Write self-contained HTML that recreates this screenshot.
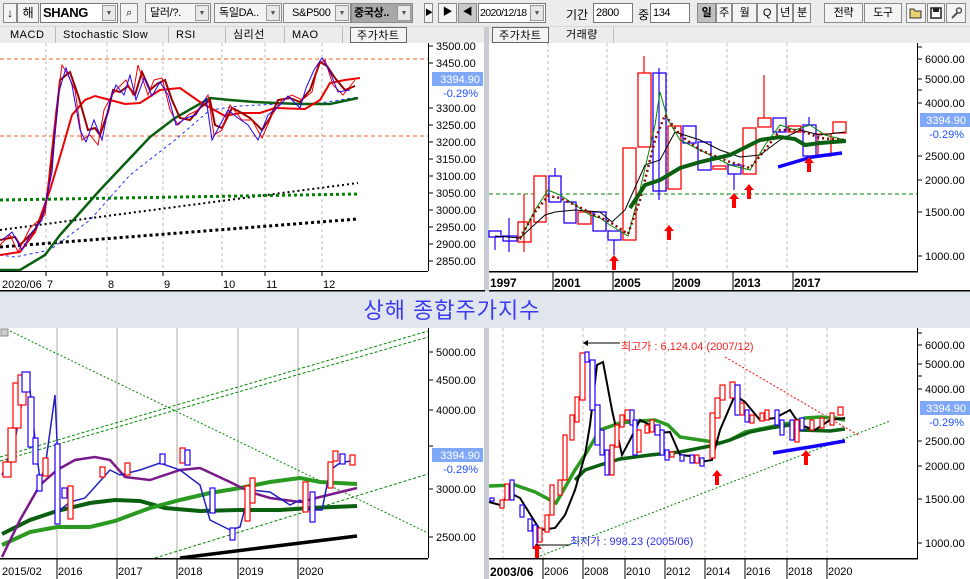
<!DOCTYPE html>
<html><head><meta charset="utf-8">
<style>
*{margin:0;padding:0;box-sizing:border-box}
body{width:970px;height:579px;overflow:hidden;background:#fff;font-family:"Liberation Sans","Noto Sans CJK KR",sans-serif;position:relative}
.bar{position:absolute;left:0;top:0;width:970px;height:27px;background:#ececec;border-bottom:1px solid #d8d8d8}
.b{position:absolute;top:3px;height:20px;border:1px solid #8a8a8a;background:#f4f4f4;font-size:11px;line-height:18px;text-align:center;color:#000;overflow:hidden;white-space:nowrap;letter-spacing:-0.3px}
.in{position:absolute;top:3px;height:20px;border:1px solid #777;background:#fff;font-size:11px;line-height:18px;padding-left:2px;color:#000;overflow:hidden;white-space:nowrap;letter-spacing:-0.4px}
.dd{position:absolute;top:1px;right:1px;width:14px;height:16px;border:1px solid #999;background:#e8e8e8;font-size:7px;line-height:15px;text-align:center;color:#555;letter-spacing:0}
.tabs{position:absolute;top:27px;height:16px;background:#ececec;font-size:11px;line-height:16px;color:#000}
.t{position:absolute;top:0;height:16px;border-right:1px solid #bbb;padding:0 6px;letter-spacing:0.5px}
.lab{position:absolute;font-size:12px;color:#000}
</style></head><body>
<div class="bar">
 <div class="b" style="left:3px;width:14px;font-size:12px">↓</div>
 <div class="b" style="left:17px;width:22px;font-size:12px">해</div>
 <div class="in" style="left:40px;width:78px;font-weight:bold;font-size:13px">SHANG<div class="dd">▼</div></div>
 <div class="b" style="left:120px;width:18px;font-size:11px">&#x2315;</div>
 <div class="b" style="left:145px;width:66px;text-align:left;padding-left:4px">달러/?.<div class="dd" style="top:1px">▼</div></div>
 <div class="b" style="left:214px;width:68px;text-align:left;padding-left:4px">독일DA..<div class="dd" style="top:1px">▼</div></div>
 <div class="b" style="left:283px;width:68px;text-align:left;padding-left:8px">S&amp;P500<div class="dd" style="top:1px">▼</div></div>
 <div class="b" style="left:351px;width:62px;text-align:left;padding-left:2px;background:#a8a8a8;font-weight:bold">중국상..<div class="dd" style="top:1px">▼</div></div>
 <div class="b" style="left:424px;width:9px;font-size:8px">▶</div>
 <div class="b" style="left:438px;width:19px;font-size:10px">▶</div>
 <div class="b" style="left:458px;width:19px;font-size:10px;background:#c8c8c8">◀</div>
 <div class="in" style="left:478px;width:68px;font-size:10.5px;padding-left:1px;letter-spacing:-0.6px">2020/12/18<div class="dd">▼</div></div>
 <div class="lab" style="left:566px;top:6px">기간</div>
 <div class="in" style="left:593px;width:40px">2800</div>
 <div class="lab" style="left:638px;top:6px">중</div>
 <div class="in" style="left:650px;width:40px">134</div>
 <div class="b" style="left:697px;width:19px;background:#c0c0c0;font-weight:bold">일</div>
 <div class="b" style="left:716px;width:16px">주</div>
 <div class="b" style="left:732px;width:25px">월</div>
 <div class="b" style="left:757px;width:20px">Q</div>
 <div class="b" style="left:777px;width:16px">년</div>
 <div class="b" style="left:793px;width:18px">분</div>
 <div class="b" style="left:824px;width:39px">전략</div>
 <div class="b" style="left:864px;width:38px">도구</div>
 <div class="b" style="left:906px;width:20px"><svg width="14" height="12" style="margin-top:3px"><path d="M1,2 h4 l1,2 h6 v7 h-11z" fill="#e8d070" stroke="#333"/></svg></div>
 <div class="b" style="left:927px;width:18px"><svg width="12" height="12" style="margin-top:3px"><rect x="1" y="1" width="10" height="10" fill="#fff" stroke="#222" stroke-width="1.5"/><rect x="3" y="1" width="6" height="4" fill="#222"/></svg></div>
 <div class="b" style="left:946px;width:20px"><svg width="12" height="12" style="margin-top:3px"><path d="M2,11 L8,5" stroke="#555" stroke-width="2"/><circle cx="9" cy="3.5" r="2.5" fill="none" stroke="#555" stroke-width="1.5"/></svg></div>
</div>
<div class="tabs" style="left:0;width:485px">
 <div class="t" style="left:4px;width:52px">MACD</div>
 <div class="t" style="left:57px;width:112px">Stochastic Slow</div>
 <div class="t" style="left:170px;width:56px">RSI</div>
 <div class="t" style="left:227px;width:58px">심리선</div>
 <div class="t" style="left:286px;width:57px">MAO</div>
 <div class="t" style="left:350px;width:57px;border:1px solid #666;background:#f4f4f4;height:16px">주가차트</div>
</div>
<div class="tabs" style="left:489px;width:481px">
 <div class="t" style="left:3px;width:57px;border:1px solid #666;background:#f4f4f4">주가차트</div>
 <div class="t" style="left:63px;width:62px;padding-left:14px">거래량</div>
</div>

<svg width="970" height="579" style="position:absolute;left:0;top:0" font-family="Liberation Sans, Noto Sans CJK KR, sans-serif">
<rect x="484" y="27" width="5" height="552" fill="#c8ccd4"/>
<rect x="0" y="291" width="970" height="37" fill="#e1e6ee"/>
<text x="452" y="318" font-size="22" fill="#3a3af0" text-anchor="middle" letter-spacing="1">상해 종합주가지수</text>

<!-- TOP LEFT -->
<g stroke="#bbb" stroke-dasharray="3,3" stroke-width="1">
<line x1="46" y1="43" x2="46" y2="271"/><line x1="107" y1="43" x2="107" y2="271"/><line x1="163" y1="43" x2="163" y2="271"/><line x1="222" y1="43" x2="222" y2="271"/><line x1="265" y1="43" x2="265" y2="271"/><line x1="322" y1="43" x2="322" y2="271"/>
</g>
<g stroke="#f06020" stroke-dasharray="4,3"><line x1="0" y1="59" x2="428" y2="59"/><line x1="0" y1="136" x2="428" y2="136"/></g>
<polyline fill="none" stroke="#000" stroke-width="3" stroke-dasharray="3,3" points="0,247 358,219"/>
<polyline fill="none" stroke="#000" stroke-width="2" stroke-dasharray="2,3" points="0,230 358,183"/>
<polyline fill="none" stroke="#008000" stroke-width="3" stroke-dasharray="3,3" points="0,200 358,194"/>
<polyline fill="none" stroke="#2030ff" stroke-width="1" stroke-dasharray="3,3" points="0,255 15,257 50,250 90,220 130,175 175,140 210,110 240,106 280,104 320,103 340,100 358,97"/>
<polyline fill="none" stroke="#0a6010" stroke-width="2.5" points="0,270 20,270 45,255 60,235 100,190 150,137 175,118 210,98 230,100 255,102 275,103 300,104 330,104 358,98"/>
<polyline fill="none" stroke="#e00" stroke-width="2" points="0,255 20,252 35,232 50,190 62,150 72,115 85,100 95,96 110,100 125,104 140,103 160,90 180,88 200,102 225,116 240,113 260,113 275,108 305,109 320,100 330,83 345,80 360,78"/>
<polyline fill="none" stroke="#900" stroke-width="2" points="0,240 15,237 20,245 35,230 45,210 52,160 60,80 70,72 78,95 88,130 95,128 100,135 108,112 113,90 120,92 128,86 135,95 142,72 150,90 157,84 165,80 172,100 180,118 190,120 200,108 210,100 215,125 222,128 232,108 240,112 250,118 262,130 270,118 278,100 290,98 300,102 310,90 320,62 327,66 335,78 345,90 355,86"/>
<polyline fill="none" stroke="#e00" stroke-width="1" points="0,245 10,235 18,252 30,228 45,215 50,165 56,110 62,65 68,75 75,90 82,140 90,135 98,145 104,110 112,95 118,88 126,80 133,95 138,65 148,95 154,80 162,78 170,110 178,125 188,115 198,110 208,95 214,135 222,130 230,105 242,120 252,120 262,138 272,115 282,100 292,95 302,100 312,92 318,65 325,60 333,85 343,95 355,80"/>
<polyline fill="none" stroke="#20f" stroke-width="1" points="2,240 12,232 22,250 32,232 42,220 52,172 58,95 66,68 72,85 80,130 86,142 94,120 102,140 110,100 116,85 124,95 130,75 136,100 144,78 152,96 160,82 168,95 176,125 186,118 196,115 206,98 212,140 220,125 228,110 238,118 248,125 258,140 268,115 280,105 288,96 300,108 306,88 314,70 322,58 330,72 338,92 350,90"/>
<rect x="428" y="43" width="1" height="228" fill="#000"/>
<g font-size="11" fill="#000">
<text x="436" y="50">3500.00</text><text x="436" y="67">3450.00</text>
<text x="436" y="112">3300.00</text><text x="436" y="129">3250.00</text><text x="436" y="146">3200.00</text><text x="436" y="163">3150.00</text><text x="436" y="180">3100.00</text><text x="436" y="197">3050.00</text><text x="436" y="214">3000.00</text><text x="436" y="231">2950.00</text><text x="436" y="248">2900.00</text><text x="436" y="265">2850.00</text>
</g>
<g stroke="#000"><line x1="428" y1="46" x2="433" y2="46"/><line x1="428" y1="63" x2="433" y2="63"/><line x1="428" y1="108" x2="433" y2="108"/><line x1="428" y1="125" x2="433" y2="125"/><line x1="428" y1="142" x2="433" y2="142"/><line x1="428" y1="159" x2="433" y2="159"/><line x1="428" y1="176" x2="433" y2="176"/><line x1="428" y1="193" x2="433" y2="193"/><line x1="428" y1="210" x2="433" y2="210"/><line x1="428" y1="227" x2="433" y2="227"/><line x1="428" y1="244" x2="433" y2="244"/><line x1="428" y1="261" x2="433" y2="261"/></g>
<rect x="432" y="72" width="51" height="14" fill="#80a8f8"/>
<text x="480" y="83" font-size="11" fill="#fff" text-anchor="end">3394.90</text>
<text x="478" y="97" font-size="11" fill="#2050ff" text-anchor="end">-0.29%</text>
<rect x="0" y="271" width="428" height="1" fill="#000"/>
<rect x="0" y="290" width="485" height="1.5" fill="#000"/>
<g stroke="#000"><line x1="46" y1="271" x2="46" y2="276"/><line x1="107" y1="271" x2="107" y2="276"/><line x1="163" y1="271" x2="163" y2="276"/><line x1="222" y1="271" x2="222" y2="276"/><line x1="265" y1="271" x2="265" y2="276"/><line x1="322" y1="271" x2="322" y2="276"/></g>
<g font-size="11" fill="#000"><text x="2" y="288">2020/06</text><text x="47" y="288">7</text><text x="108" y="288">8</text><text x="164" y="288">9</text><text x="223" y="288">10</text><text x="266" y="288">11</text><text x="323" y="288">12</text></g>

<!-- TOP RIGHT -->
<g stroke="#bbb" stroke-dasharray="3,3"><line x1="548" y1="43" x2="548" y2="271"/><line x1="607" y1="43" x2="607" y2="271"/><line x1="667" y1="43" x2="667" y2="271"/><line x1="727" y1="43" x2="727" y2="271"/><line x1="787" y1="43" x2="787" y2="271"/></g>
<line x1="489" y1="194" x2="918" y2="194" stroke="#080" stroke-dasharray="4,3"/>
<g fill="#fff" stroke-width="1.3">
<rect x="489" y="231" width="12" height="6" stroke="#20f"/><rect x="503" y="236" width="14" height="5" stroke="#20f"/>
<rect x="518" y="222" width="13" height="20" stroke="#f00"/><rect x="534" y="176" width="12" height="46" stroke="#f00"/>
<rect x="549" y="176" width="12" height="26" stroke="#20f"/><rect x="564" y="202" width="12" height="21" stroke="#20f"/>
<rect x="578" y="212" width="13" height="12" stroke="#f00"/><rect x="593" y="212" width="13" height="19" stroke="#20f"/>
<rect x="608" y="231" width="13" height="9" stroke="#20f"/><rect x="623" y="148" width="13" height="92" stroke="#f00"/>
<rect x="638" y="73" width="13" height="74" stroke="#f00"/><rect x="653" y="73" width="13" height="118" stroke="#20f"/>
<rect x="668" y="126" width="13" height="63" stroke="#f00"/><rect x="683" y="126" width="13" height="17" stroke="#20f"/>
<rect x="698" y="142" width="13" height="28" stroke="#20f"/><rect x="713" y="166" width="13" height="3" stroke="#f00"/>
<rect x="728" y="165" width="13" height="9" stroke="#20f"/><rect x="743" y="128" width="13" height="46" stroke="#f00"/>
<rect x="758" y="118" width="13" height="9" stroke="#f00"/><rect x="773" y="118" width="13" height="14" stroke="#20f"/>
<rect x="788" y="126" width="13" height="6" stroke="#f00"/><rect x="803" y="125" width="13" height="31" stroke="#20f"/>
<rect x="818" y="134" width="13" height="22" stroke="#f00"/><rect x="833" y="122" width="13" height="11" stroke="#f00"/>
</g>
<g stroke-width="1.2"><line x1="495" y1="237" x2="495" y2="250" stroke="#20f"/><line x1="509" y1="218" x2="509" y2="252" stroke="#20f"/><line x1="524" y1="194" x2="524" y2="252" stroke="#f00"/><line x1="555" y1="168" x2="555" y2="176" stroke="#20f"/><line x1="614" y1="240" x2="614" y2="255" stroke="#20f"/><line x1="644" y1="56" x2="644" y2="73" stroke="#f00"/><line x1="659" y1="68" x2="659" y2="200" stroke="#20f"/><line x1="734" y1="174" x2="734" y2="190" stroke="#20f"/><line x1="764" y1="75" x2="764" y2="118" stroke="#f00"/><line x1="809" y1="117" x2="809" y2="125" stroke="#20f"/></g>
<polyline fill="none" stroke="#000" stroke-width="1" points="495,236 520,238 545,215 555,212 575,210 600,212 612,222 625,210 645,165 660,160 675,132 700,140 720,150 740,157 760,155 780,140 800,130 820,135 845,132"/>
<polyline fill="none" stroke="#080" stroke-width="1" points="520,240 535,210 548,190 560,195 575,205 590,215 600,218 610,225 628,236 640,190 655,125 660,92 668,120 680,140 700,150 730,165 750,170 765,145 780,125 795,130 810,125 825,135 845,140"/>
<polyline fill="none" stroke="#800" stroke-width="2.5" stroke-dasharray="2,3" points="520,238 535,212 548,196 560,198 575,205 595,215 610,222 628,234 640,200 655,140 665,115 680,135 700,150 730,162 750,168 765,150 780,130 800,130 820,138 845,140"/>
<polyline fill="none" stroke="#0a6010" stroke-width="4" points="630,208 645,185 660,180 680,168 700,162 730,155 760,140 780,137 795,139 805,145 820,143 846,141"/>
<polyline fill="none" stroke="#10f" stroke-width="3.5" points="778,167 812,157 842,153"/>
<g fill="#f00">
<path d="M614,255 l-5,6 h3 v9 h4 v-9 h3z"/><path d="M669,225 l-5,6 h3 v9 h4 v-9 h3z"/>
<path d="M734,193 l-5,6 h3 v9 h4 v-9 h3z"/><path d="M749,184 l-5,6 h3 v9 h4 v-9 h3z"/><path d="M809,157 l-5,6 h3 v9 h4 v-9 h3z"/>
</g>
<rect x="917" y="43" width="1" height="228" fill="#000"/>
<g font-size="11" fill="#000"><text x="925" y="63">6000.00</text><text x="925" y="83">5000.00</text><text x="925" y="107">4000.00</text><text x="925" y="160">2500.00</text><text x="925" y="184">2000.00</text><text x="925" y="216">1500.00</text><text x="925" y="260">1000.00</text></g>
<g stroke="#000"><line x1="917" y1="47" x2="922" y2="47"/><line x1="917" y1="59" x2="922" y2="59"/><line x1="917" y1="79" x2="922" y2="79"/><line x1="917" y1="90" x2="922" y2="90"/><line x1="917" y1="103" x2="922" y2="103"/><line x1="917" y1="156" x2="922" y2="156"/><line x1="917" y1="180" x2="922" y2="180"/><line x1="917" y1="212" x2="922" y2="212"/><line x1="917" y1="256" x2="922" y2="256"/></g>
<rect x="920" y="113" width="50" height="14" fill="#80a8f8"/>
<text x="966" y="124" font-size="11" fill="#fff" text-anchor="end">3394.90</text>
<text x="964" y="138" font-size="11" fill="#2050ff" text-anchor="end">-0.29%</text>
<rect x="489" y="271" width="429" height="1.5" fill="#000"/>
<rect x="489" y="290" width="481" height="1.5" fill="#000"/>
<g stroke="#000"><line x1="553" y1="271" x2="553" y2="290"/><line x1="613" y1="271" x2="613" y2="290"/><line x1="673" y1="271" x2="673" y2="290"/><line x1="733" y1="271" x2="733" y2="290"/><line x1="793" y1="271" x2="793" y2="290"/></g>
<g font-size="12" font-weight="bold" fill="#000"><text x="490" y="287">1997</text><text x="554" y="287">2001</text><text x="614" y="287">2005</text><text x="674" y="287">2009</text><text x="734" y="287">2013</text><text x="794" y="287">2017</text></g>

<!-- BOTTOM LEFT -->
<g stroke="#aaa"><line x1="57" y1="328" x2="57" y2="558"/><line x1="117" y1="328" x2="117" y2="558"/><line x1="177" y1="328" x2="177" y2="558"/><line x1="238" y1="328" x2="238" y2="558"/><line x1="298" y1="328" x2="298" y2="558"/></g>
<rect x="1" y="329" width="7" height="7" fill="#ccc" stroke="#888"/>
<g fill="none" stroke="#080" stroke-dasharray="3,2"><line x1="0" y1="457" x2="428" y2="331"/><line x1="0" y1="461" x2="428" y2="337"/><line x1="155" y1="558" x2="428" y2="474"/></g>
<line x1="10" y1="331" x2="428" y2="533" stroke="#080" stroke-dasharray="2,2"/>
<polyline fill="none" stroke="#000" stroke-width="3.5" points="180,558 260,548 357,536"/>
<polyline fill="none" stroke="#0a6010" stroke-width="4" points="2,534 30,520 57,511 90,503 115,500 140,501 165,508 200,511 238,510 280,510 310,508 357,506"/>
<polyline fill="none" stroke="#2a9a20" stroke-width="4" points="2,545 30,532 57,527 90,527 115,521 150,508 180,500 210,493 240,488 270,482 300,478 320,482 357,484"/>
<polyline fill="none" stroke="#7a1a8a" stroke-width="2.5" points="2,557 20,520 40,485 57,470 75,460 95,457 110,460 125,477 150,480 180,470 200,468 230,482 250,492 270,498 300,502 320,497 357,488"/>
<polyline fill="none" stroke="#2020c0" stroke-width="1.5" points="2,475 15,440 25,385 30,390 35,440 40,480 45,468 55,395 60,510 70,502 85,498 110,470 120,475 140,470 160,463 180,470 200,485 210,520 230,530 240,527 250,490 270,492 290,505 300,500 310,510 322,510 330,470 340,463 355,460"/>
<g fill="#fff" stroke-width="1.2">
<rect x="3" y="462" width="8" height="15" stroke="#f00"/><rect x="8" y="428" width="8" height="34" stroke="#f00"/><rect x="13" y="383" width="8" height="45" stroke="#f00"/><rect x="18" y="375" width="8" height="30" stroke="#f00"/><rect x="22" y="372" width="8" height="20" stroke="#20f"/><rect x="28" y="397" width="6" height="50" stroke="#20f"/><rect x="33" y="438" width="5" height="26" stroke="#20f"/><rect x="37" y="475" width="5" height="16" stroke="#20f"/><rect x="43" y="458" width="5" height="18" stroke="#f00"/>
<rect x="55" y="444" width="5" height="80" stroke="#20f"/><rect x="62" y="488" width="5" height="10" stroke="#20f"/><rect x="68" y="486" width="5" height="33" stroke="#f00"/>
<rect x="245" y="486" width="5" height="35" stroke="#f00"/><rect x="250" y="478" width="5" height="25" stroke="#f00"/><rect x="303" y="482" width="5" height="30" stroke="#f00"/><rect x="310" y="492" width="5" height="30" stroke="#20f"/><rect x="328" y="462" width="5" height="26" stroke="#f00"/><rect x="333" y="451" width="5" height="10" stroke="#f00"/><rect x="340" y="454" width="5" height="10" stroke="#20f"/><rect x="350" y="455" width="5" height="10" stroke="#f00"/>
<rect x="160" y="454" width="5" height="10" stroke="#20f"/><rect x="180" y="448" width="5" height="15" stroke="#f00"/><rect x="185" y="450" width="5" height="15" stroke="#20f"/><rect x="210" y="488" width="5" height="25" stroke="#20f"/><rect x="230" y="528" width="5" height="12" stroke="#20f"/><rect x="100" y="467" width="5" height="10" stroke="#f00"/><rect x="125" y="463" width="5" height="12" stroke="#f00"/>
</g>
<rect x="428" y="328" width="1" height="230" fill="#000"/>
<g font-size="11" fill="#000"><text x="436" y="356">5000.00</text><text x="436" y="384">4500.00</text><text x="436" y="414">4000.00</text><text x="436" y="493">3000.00</text><text x="436" y="541">2500.00</text></g>
<g stroke="#000"><line x1="428" y1="352" x2="433" y2="352"/><line x1="428" y1="380" x2="433" y2="380"/><line x1="428" y1="410" x2="433" y2="410"/><line x1="428" y1="446" x2="433" y2="446"/><line x1="428" y1="489" x2="433" y2="489"/><line x1="428" y1="537" x2="433" y2="537"/></g>
<rect x="432" y="448" width="51" height="14" fill="#80a8f8"/>
<text x="480" y="459" font-size="11" fill="#fff" text-anchor="end">3394.90</text>
<text x="478" y="473" font-size="11" fill="#2050ff" text-anchor="end">-0.29%</text>
<rect x="0" y="558" width="428" height="1.5" fill="#000"/>
<g stroke="#000"><line x1="57" y1="558" x2="57" y2="579"/><line x1="117" y1="558" x2="117" y2="579"/><line x1="177" y1="558" x2="177" y2="579"/><line x1="238" y1="558" x2="238" y2="579"/><line x1="298" y1="558" x2="298" y2="579"/></g>
<g font-size="11" fill="#000"><text x="2" y="575">2015/02</text><text x="58" y="575">2016</text><text x="118" y="575">2017</text><text x="178" y="575">2018</text><text x="239" y="575">2019</text><text x="299" y="575">2020</text></g>

<!-- BOTTOM RIGHT -->
<g stroke="#bbb" stroke-dasharray="3,3"><line x1="503" y1="328" x2="503" y2="558"/><line x1="543" y1="328" x2="543" y2="558"/><line x1="583" y1="328" x2="583" y2="558"/><line x1="625" y1="328" x2="625" y2="558"/><line x1="665" y1="328" x2="665" y2="558"/><line x1="705" y1="328" x2="705" y2="558"/><line x1="745" y1="328" x2="745" y2="558"/><line x1="787" y1="328" x2="787" y2="558"/><line x1="827" y1="328" x2="827" y2="558"/></g>
<line x1="540" y1="556" x2="890" y2="421" stroke="#080" stroke-dasharray="2,2"/>
<line x1="725" y1="357" x2="860" y2="436" stroke="#f00" stroke-dasharray="2,2"/>
<polyline fill="none" stroke="#2a9a20" stroke-width="3.5" points="489,486 515,485 535,492 556,503 575,470 585,455 600,430 620,423 640,421 655,420 668,425 680,437 700,440 720,443 730,440 745,432 770,427 790,423 805,418 820,417 835,418 845,420"/>
<polyline fill="none" stroke="#0a6010" stroke-width="3.5" points="575,480 585,470 600,465 620,459 650,455 680,452 710,446 730,440 750,432 770,428 790,425 800,430 830,431 845,429"/>
<polyline fill="none" stroke="#000" stroke-width="2" points="489,502 500,505 510,493 520,498 540,530 555,528 565,515 575,490 585,455 590,425 597,365 603,362 612,410 622,455 630,440 640,420 650,425 660,433 670,432 680,455 690,456 700,462 712,460 720,430 735,395 745,402 760,420 775,418 790,410 800,425 815,430 830,420 845,418"/>
<polyline fill="none" stroke="#10f" stroke-width="3.5" points="773,453 810,447 845,441"/>
<g fill="#fff" stroke-width="1.2">
<rect x="490" y="498" width="4" height="3" stroke="#20f"/><rect x="500" y="500" width="4" height="8" stroke="#f00"/><rect x="505" y="484" width="4" height="16" stroke="#f00"/><rect x="510" y="480" width="4" height="20" stroke="#20f"/><rect x="520" y="505" width="4" height="12" stroke="#20f"/><rect x="528" y="519" width="4" height="12" stroke="#20f"/><rect x="533" y="525" width="4" height="22" stroke="#20f"/><rect x="538" y="528" width="4" height="14" stroke="#f00"/><rect x="545" y="515" width="4" height="17" stroke="#f00"/><rect x="550" y="485" width="4" height="30" stroke="#f00"/><rect x="558" y="480" width="4" height="15" stroke="#f00"/><rect x="563" y="435" width="4" height="45" stroke="#f00"/><rect x="570" y="415" width="4" height="25" stroke="#f00"/><rect x="575" y="397" width="4" height="25" stroke="#f00"/><rect x="580" y="353" width="5" height="47" stroke="#f00"/><rect x="585" y="352" width="4" height="10" stroke="#20f"/><rect x="590" y="360" width="5" height="50" stroke="#20f"/><rect x="595" y="405" width="5" height="40" stroke="#20f"/><rect x="600" y="430" width="4" height="25" stroke="#20f"/><rect x="605" y="450" width="4" height="25" stroke="#20f"/><rect x="610" y="445" width="4" height="30" stroke="#f00"/><rect x="615" y="425" width="4" height="22" stroke="#f00"/><rect x="620" y="415" width="4" height="12" stroke="#f00"/><rect x="625" y="410" width="5" height="10" stroke="#f00"/><rect x="630" y="410" width="4" height="15" stroke="#20f"/><rect x="633" y="420" width="4" height="35" stroke="#20f"/><rect x="637" y="430" width="4" height="22" stroke="#f00"/><rect x="645" y="425" width="4" height="8" stroke="#f00"/><rect x="650" y="420" width="4" height="12" stroke="#f00"/><rect x="655" y="425" width="5" height="10" stroke="#20f"/><rect x="660" y="430" width="4" height="25" stroke="#20f"/><rect x="665" y="450" width="4" height="10" stroke="#20f"/><rect x="670" y="452" width="4" height="5" stroke="#f00"/><rect x="680" y="455" width="4" height="6" stroke="#20f"/><rect x="690" y="455" width="4" height="8" stroke="#20f"/><rect x="695" y="455" width="4" height="8" stroke="#f00"/><rect x="700" y="458" width="4" height="8" stroke="#20f"/><rect x="710" y="413" width="5" height="45" stroke="#f00"/><rect x="715" y="398" width="5" height="20" stroke="#f00"/><rect x="720" y="385" width="5" height="15" stroke="#f00"/><rect x="730" y="382" width="5" height="16" stroke="#f00"/><rect x="735" y="385" width="5" height="30" stroke="#20f"/><rect x="740" y="403" width="4" height="12" stroke="#f00"/><rect x="745" y="410" width="4" height="12" stroke="#20f"/><rect x="750" y="415" width="4" height="8" stroke="#f00"/><rect x="760" y="413" width="4" height="8" stroke="#f00"/><rect x="765" y="410" width="4" height="10" stroke="#f00"/><rect x="775" y="410" width="4" height="15" stroke="#20f"/><rect x="780" y="420" width="4" height="15" stroke="#20f"/><rect x="790" y="420" width="4" height="20" stroke="#20f"/><rect x="795" y="420" width="4" height="22" stroke="#f00"/><rect x="800" y="418" width="4" height="12" stroke="#20f"/><rect x="810" y="420" width="4" height="10" stroke="#f00"/><rect x="820" y="418" width="4" height="10" stroke="#f00"/><rect x="830" y="413" width="4" height="12" stroke="#f00"/><rect x="838" y="407" width="5" height="8" stroke="#f00"/>
</g>
<g fill="#f00"><path d="M537,543 l-5,6 h3 v9 h4 v-9 h3z"/><path d="M717,470 l-5,6 h3 v9 h4 v-9 h3z"/><path d="M806,450 l-5,6 h3 v9 h4 v-9 h3z"/></g>
<line x1="583" y1="343" x2="620" y2="343" stroke="#000"/><path d="M583,343 l5,-3 v6z"/>
<text x="621" y="350" font-size="11" fill="#f02020">최고가 : 6,124.04 (2007/12)</text>
<line x1="535" y1="545" x2="570" y2="545" stroke="#000"/>
<text x="570" y="545" font-size="11" fill="#3030f0">최저가 : 998.23 (2005/06)</text>
<rect x="917" y="328" width="1" height="230" fill="#000"/>
<g font-size="11" fill="#000"><text x="925" y="349">6000.00</text><text x="925" y="368">5000.00</text><text x="925" y="393">4000.00</text><text x="925" y="445">2500.00</text><text x="925" y="470">2000.00</text><text x="925" y="503">1500.00</text><text x="925" y="547">1000.00</text></g>
<g stroke="#000"><line x1="917" y1="333" x2="922" y2="333"/><line x1="917" y1="345" x2="922" y2="345"/><line x1="917" y1="364" x2="922" y2="364"/><line x1="917" y1="376" x2="922" y2="376"/><line x1="917" y1="389" x2="922" y2="389"/><line x1="917" y1="441" x2="922" y2="441"/><line x1="917" y1="466" x2="922" y2="466"/><line x1="917" y1="499" x2="922" y2="499"/><line x1="917" y1="543" x2="922" y2="543"/></g>
<rect x="920" y="401" width="50" height="14" fill="#80a8f8"/>
<text x="966" y="412" font-size="11" fill="#fff" text-anchor="end">3394.90</text>
<text x="964" y="426" font-size="11" fill="#2050ff" text-anchor="end">-0.29%</text>
<rect x="489" y="558" width="429" height="1.5" fill="#000"/>
<g stroke="#000"><line x1="543" y1="558" x2="543" y2="579"/><line x1="583" y1="558" x2="583" y2="579"/><line x1="625" y1="558" x2="625" y2="579"/><line x1="665" y1="558" x2="665" y2="579"/><line x1="705" y1="558" x2="705" y2="579"/><line x1="745" y1="558" x2="745" y2="579"/><line x1="787" y1="558" x2="787" y2="579"/><line x1="827" y1="558" x2="827" y2="579"/></g>
<text x="490" y="576" font-size="12" font-weight="bold" fill="#000">2003/06</text>
<g font-size="11" fill="#000"><text x="544" y="575">2006</text><text x="584" y="575">2008</text><text x="626" y="575">2010</text><text x="666" y="575">2012</text><text x="706" y="575">2014</text><text x="746" y="575">2016</text><text x="788" y="575">2018</text><text x="828" y="575">2020</text></g>
</svg>
</body></html>
